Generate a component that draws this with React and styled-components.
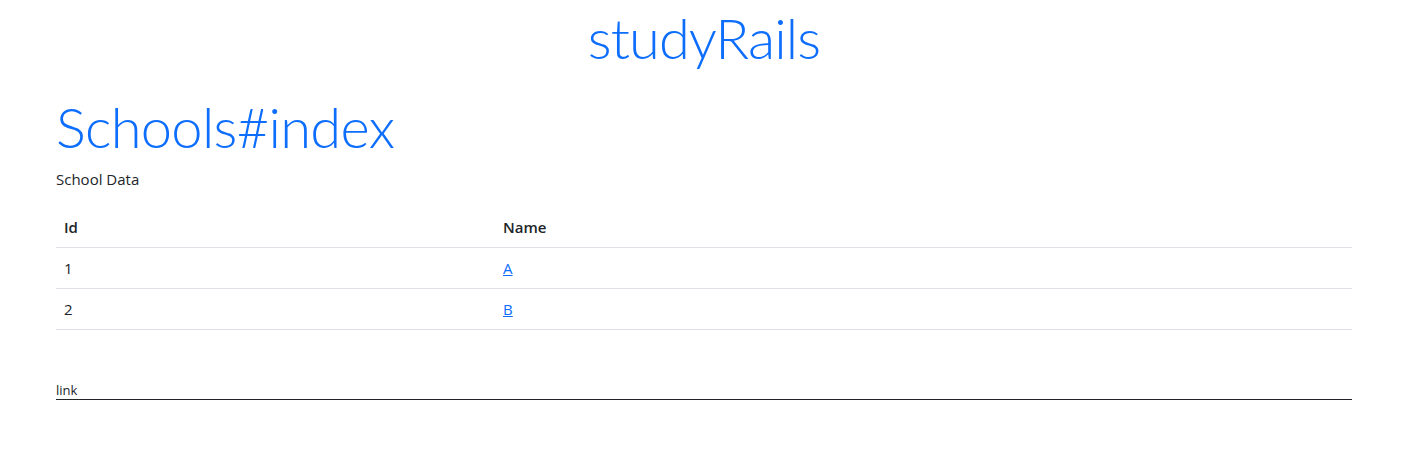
import styled, { createGlobalStyle } from "styled-components";

const GlobalStyle = createGlobalStyle`
  body {
    margin: 0;
    font-family: "Open Sans", "Noto Sans", sans-serif;
    font-size: 16px;
    line-height: 1.5;
    color: #212529;
    background: #fff;
  }
`;

const Page = styled.div`
  width: 1296px;
  margin: 0 0 0 56px;
  padding-top: 4px;
`;

const SiteTitle = styled.h1`
  margin: 0 0 22px;
  text-align: center;
  font-family: Lato, "Open Sans", sans-serif;
  font-size: 56px;
  font-weight: 300;
  line-height: 1.2;
  letter-spacing: -0.9px;
  color: #0d6efd;
`;

const PageTitle = styled.h1`
  margin: 0 0 7px;
  font-family: Lato, "Open Sans", sans-serif;
  font-size: 56px;
  font-weight: 300;
  line-height: 1.2;
  letter-spacing: -0.7px;
  color: #0d6efd;
`;

const Lead = styled.p`
  margin: 0 0 16px;
  font-size: 15px;
  line-height: 24px;
`;

const Table = styled.table`
  width: 100%;
  border-collapse: collapse;
  margin-bottom: 16px;
  font-size: 15px;
  line-height: 24px;
`;

const HeadCell = styled.th`
  text-align: left;
  font-weight: 600;
  padding: 8px;
  border-bottom: 1px solid #dee2e6;
  width: ${(p) => p.width || "auto"};
`;

const Cell = styled.td`
  padding: 8px;
  border-bottom: 1px solid #dee2e6;
`;

const NameLink = styled.a`
  color: #0d6efd;
  text-decoration: underline;
`;

const FooterLink = styled.a`
  display: block;
  margin-top: 53px;
  font-size: 13px;
  line-height: 1.2;
  color: #212529;
  text-decoration: none;
  border-bottom: 1px solid #212529;
`;

const schools = [
  { id: 1, name: "A" },
  { id: 2, name: "B" },
];

export default function App() {
  return (
    <>
      <GlobalStyle />
      <Page>
        <SiteTitle>studyRails</SiteTitle>
        <PageTitle>Schools#index</PageTitle>
        <Lead>School Data</Lead>
        <Table>
          <thead>
            <tr>
              <HeadCell width="423px">Id</HeadCell>
              <HeadCell>Name</HeadCell>
            </tr>
          </thead>
          <tbody>
            {schools.map((s) => (
              <tr key={s.id}>
                <Cell>{s.id}</Cell>
                <Cell>
                  <NameLink href="#">{s.name}</NameLink>
                </Cell>
              </tr>
            ))}
          </tbody>
        </Table>
        <FooterLink href="#">link</FooterLink>
      </Page>
    </>
  );
}
